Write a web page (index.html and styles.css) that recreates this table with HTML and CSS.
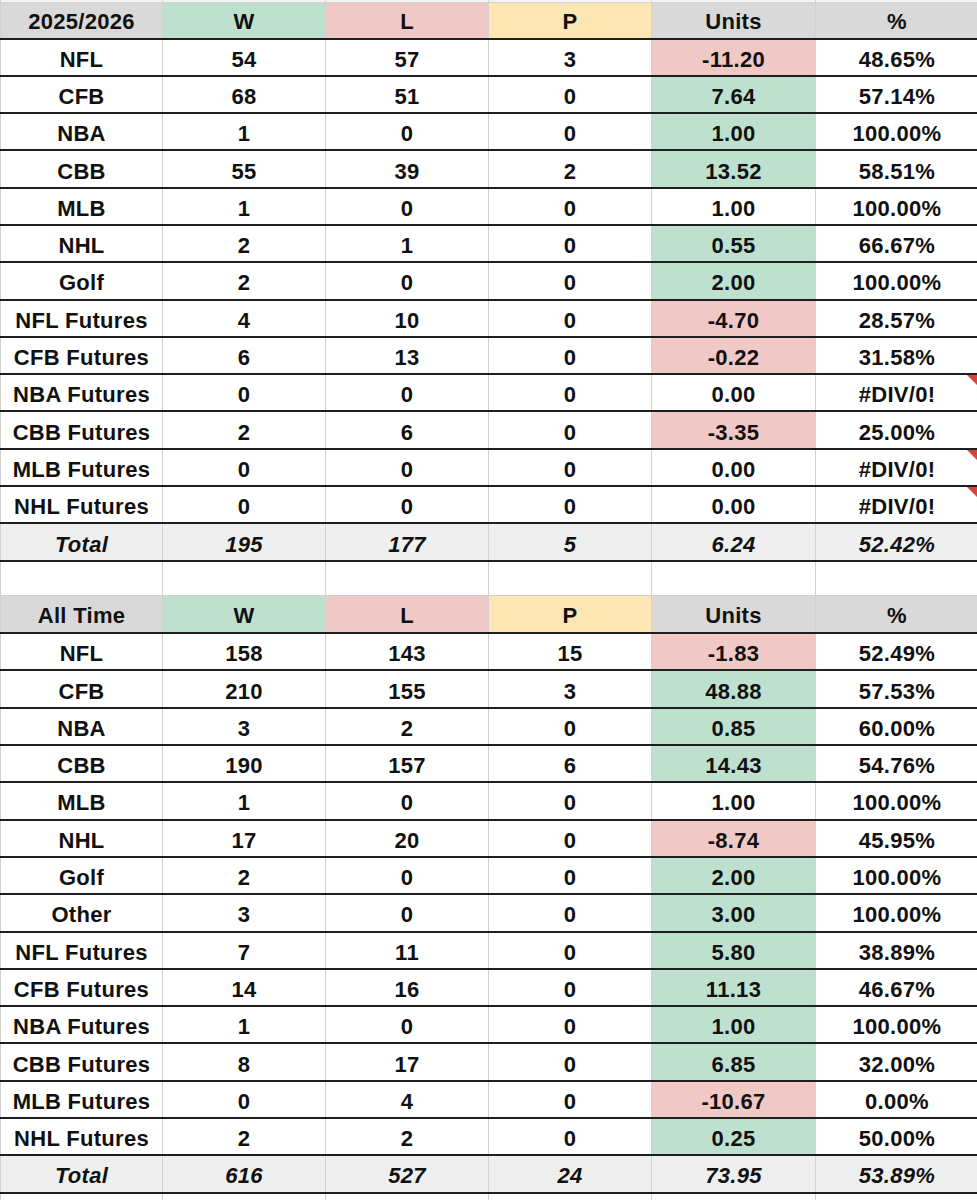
FILE: index.html
```html
<!DOCTYPE html>
<html>
<head>
<meta charset="utf-8">
<link rel="stylesheet" href="styles.css">
</head>
<body>
<div class="sheet">
  <div class="row strip"><div class="c"></div><div class="c"></div><div class="c"></div><div class="c"></div><div class="c"></div><div class="c"></div></div>

  <div class="row head"><div class="c gray">2025/2026</div><div class="c green">W</div><div class="c red">L</div><div class="c yellow">P</div><div class="c gray">Units</div><div class="c gray">%</div></div>
  <div class="row"><div class="c">NFL</div><div class="c">54</div><div class="c">57</div><div class="c">3</div><div class="c red">-11.20</div><div class="c">48.65%</div></div>
  <div class="row"><div class="c">CFB</div><div class="c">68</div><div class="c">51</div><div class="c">0</div><div class="c green">7.64</div><div class="c">57.14%</div></div>
  <div class="row"><div class="c">NBA</div><div class="c">1</div><div class="c">0</div><div class="c">0</div><div class="c green">1.00</div><div class="c">100.00%</div></div>
  <div class="row"><div class="c">CBB</div><div class="c">55</div><div class="c">39</div><div class="c">2</div><div class="c green">13.52</div><div class="c">58.51%</div></div>
  <div class="row"><div class="c">MLB</div><div class="c">1</div><div class="c">0</div><div class="c">0</div><div class="c">1.00</div><div class="c">100.00%</div></div>
  <div class="row"><div class="c">NHL</div><div class="c">2</div><div class="c">1</div><div class="c">0</div><div class="c green">0.55</div><div class="c">66.67%</div></div>
  <div class="row"><div class="c">Golf</div><div class="c">2</div><div class="c">0</div><div class="c">0</div><div class="c green">2.00</div><div class="c">100.00%</div></div>
  <div class="row"><div class="c">NFL Futures</div><div class="c">4</div><div class="c">10</div><div class="c">0</div><div class="c red">-4.70</div><div class="c">28.57%</div></div>
  <div class="row"><div class="c">CFB Futures</div><div class="c">6</div><div class="c">13</div><div class="c">0</div><div class="c red">-0.22</div><div class="c">31.58%</div></div>
  <div class="row"><div class="c">NBA Futures</div><div class="c">0</div><div class="c">0</div><div class="c">0</div><div class="c">0.00</div><div class="c note">#DIV/0!</div></div>
  <div class="row"><div class="c">CBB Futures</div><div class="c">2</div><div class="c">6</div><div class="c">0</div><div class="c red">-3.35</div><div class="c">25.00%</div></div>
  <div class="row"><div class="c">MLB Futures</div><div class="c">0</div><div class="c">0</div><div class="c">0</div><div class="c">0.00</div><div class="c note">#DIV/0!</div></div>
  <div class="row"><div class="c">NHL Futures</div><div class="c">0</div><div class="c">0</div><div class="c">0</div><div class="c">0.00</div><div class="c note">#DIV/0!</div></div>
  <div class="row total"><div class="c">Total</div><div class="c">195</div><div class="c">177</div><div class="c">5</div><div class="c">6.24</div><div class="c">52.42%</div></div>

  <div class="row blank"><div class="c"></div><div class="c"></div><div class="c"></div><div class="c"></div><div class="c"></div><div class="c"></div></div>

  <div class="row head head2"><div class="c gray">All Time</div><div class="c green">W</div><div class="c red">L</div><div class="c yellow">P</div><div class="c gray">Units</div><div class="c gray">%</div></div>
  <div class="row"><div class="c">NFL</div><div class="c">158</div><div class="c">143</div><div class="c">15</div><div class="c red">-1.83</div><div class="c">52.49%</div></div>
  <div class="row"><div class="c">CFB</div><div class="c">210</div><div class="c">155</div><div class="c">3</div><div class="c green">48.88</div><div class="c">57.53%</div></div>
  <div class="row"><div class="c">NBA</div><div class="c">3</div><div class="c">2</div><div class="c">0</div><div class="c green">0.85</div><div class="c">60.00%</div></div>
  <div class="row"><div class="c">CBB</div><div class="c">190</div><div class="c">157</div><div class="c">6</div><div class="c green">14.43</div><div class="c">54.76%</div></div>
  <div class="row"><div class="c">MLB</div><div class="c">1</div><div class="c">0</div><div class="c">0</div><div class="c">1.00</div><div class="c">100.00%</div></div>
  <div class="row"><div class="c">NHL</div><div class="c">17</div><div class="c">20</div><div class="c">0</div><div class="c red">-8.74</div><div class="c">45.95%</div></div>
  <div class="row"><div class="c">Golf</div><div class="c">2</div><div class="c">0</div><div class="c">0</div><div class="c green">2.00</div><div class="c">100.00%</div></div>
  <div class="row"><div class="c">Other</div><div class="c">3</div><div class="c">0</div><div class="c">0</div><div class="c green">3.00</div><div class="c">100.00%</div></div>
  <div class="row"><div class="c">NFL Futures</div><div class="c">7</div><div class="c">11</div><div class="c">0</div><div class="c green">5.80</div><div class="c">38.89%</div></div>
  <div class="row"><div class="c">CFB Futures</div><div class="c">14</div><div class="c">16</div><div class="c">0</div><div class="c green">11.13</div><div class="c">46.67%</div></div>
  <div class="row"><div class="c">NBA Futures</div><div class="c">1</div><div class="c">0</div><div class="c">0</div><div class="c green">1.00</div><div class="c">100.00%</div></div>
  <div class="row"><div class="c">CBB Futures</div><div class="c">8</div><div class="c">17</div><div class="c">0</div><div class="c green">6.85</div><div class="c">32.00%</div></div>
  <div class="row"><div class="c">MLB Futures</div><div class="c">0</div><div class="c">4</div><div class="c">0</div><div class="c red">-10.67</div><div class="c">0.00%</div></div>
  <div class="row"><div class="c">NHL Futures</div><div class="c">2</div><div class="c">2</div><div class="c">0</div><div class="c green">0.25</div><div class="c">50.00%</div></div>
  <div class="row total"><div class="c">Total</div><div class="c">616</div><div class="c">527</div><div class="c">24</div><div class="c">73.95</div><div class="c">53.89%</div></div>

  <div class="row tail"><div class="c"></div><div class="c"></div><div class="c"></div><div class="c"></div><div class="c"></div><div class="c"></div></div>
</div>
</body>
</html>
```
FILE: styles.css
```css
html, body {
  margin: 0;
  padding: 0;
  background: #ffffff;
  overflow: hidden;
}
.sheet {
  width: 979px;
  font-family: "Liberation Sans", Arial, sans-serif;
  font-weight: bold;
  font-size: 22px;
  letter-spacing: 0.3px;
  color: #111111;
}
.row {
  display: grid;
  grid-template-columns: 163px 163px 163px 163px 164px 163px;
  height: 37.3px;
  box-sizing: border-box;
  border-bottom: 2px solid #1e1e1e;
}
.c {
  display: flex;
  align-items: center;
  justify-content: center;
  padding-top: 5px;
  box-sizing: border-box;
  border-right: 1.5px solid #d2d2d2;
  position: relative;
  white-space: nowrap;
}
.c:first-child {
  border-left: 1.5px solid #d2d2d2;
}
.strip {
  height: 3px;
  background: #f4f4f4;
  border-bottom: 1px solid #d4d4d4;
}
.head {
  height: 36.5px;
}
.head .c {
  padding-top: 4px;
}
.head2 {
  height: 38.5px;
}
.blank {
  height: 34px;
  border-bottom: 1px solid #cfcfcf;
}
.tail {
  height: 10px;
  border-bottom: none;
}
.gray { background: #d9d9d9; }
.green { background: #bee1cf; }
.red { background: #f0c9c6; }
.yellow { background: #fbe6b4; }
.total {
  background: #efefef;
  font-style: italic;
}
.note::after {
  content: "";
  position: absolute;
  top: 0;
  right: 0;
  width: 0;
  height: 0;
  border-top: 11px solid #d6453d;
  border-left: 11px solid transparent;
}
```
